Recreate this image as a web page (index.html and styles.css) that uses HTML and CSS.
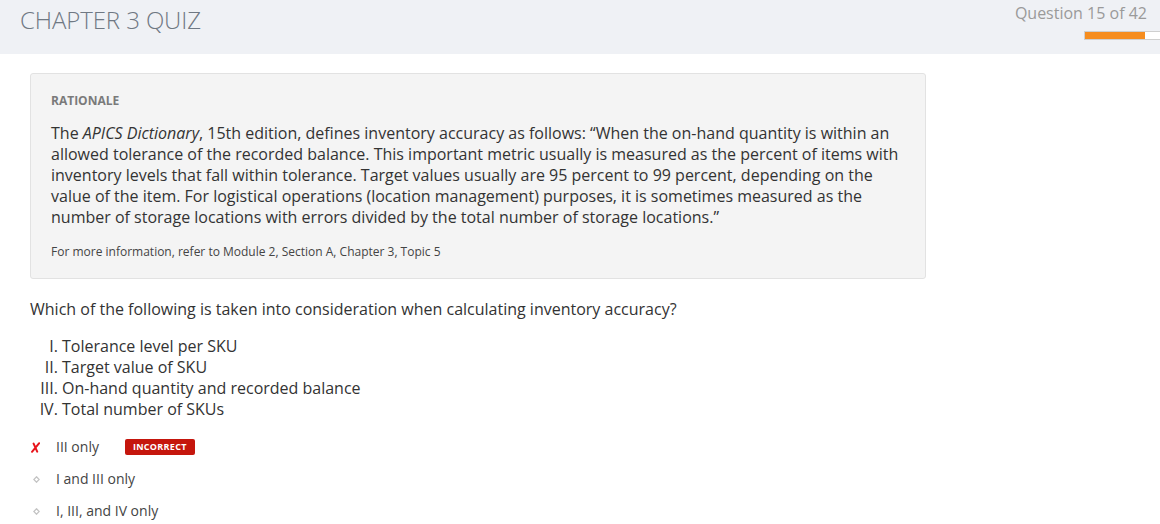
FILE: index.html
```html
<!DOCTYPE html>
<html>
<head>
<meta charset="utf-8">
<link rel="stylesheet" href="styles.css">
</head>
<body>
<header class="top">
  <h1 class="title">CHAPTER 3 QUIZ</h1>
  <div class="progress-area">
    <div class="counter">Question 15 of 42</div>
    <div class="bar"><div class="fill" style="width:80%"></div></div>
  </div>
</header>
<main class="content">
  <section class="rationale">
    <div class="r-head">RATIONALE</div>
    <p class="r-body">The <em>APICS Dictionary</em>, 15th edition, defines inventory accuracy as follows: “When the on-hand quantity is within an allowed tolerance of the recorded balance. This important metric usually is measured as the percent of items with inventory levels that fall within tolerance. Target values usually are 95 percent to 99 percent, depending on the value of the item. For logistical operations (location management) purposes, it is sometimes measured as the number of storage locations with errors divided by the total number of storage locations.”</p>
    <p class="r-ref">For more information, refer to Module 2, Section A, Chapter 3, Topic 5</p>
  </section>
  <p class="question">Which of the following is taken into consideration when calculating inventory accuracy?</p>
  <ol class="roman">
    <li>Tolerance level per SKU</li>
    <li>Target value of SKU</li>
    <li>On-hand quantity and recorded balance</li>
    <li>Total number of SKUs</li>
  </ol>
  <ul class="options">
    <li class="opt"><span class="mark"><svg width="9" height="11" viewBox="0 0 9 11"><path d="M2.6 1.6 L6.2 9.6 M8.2 1.2 L1 9.8" fill="none" stroke="#e8141b" stroke-width="2" stroke-linecap="round"/></svg></span><span class="opt-text">III only</span><span class="badge">INCORRECT</span></li>
    <li class="opt"><span class="mark dia"><svg width="7" height="7" viewBox="0 0 7 7"><path d="M3.5 0.8 L6.2 3.5 L3.5 6.2 L0.8 3.5 Z" fill="none" stroke="#c4c4c4" stroke-width="1.3"/></svg></span><span class="opt-text">I and III only</span></li>
    <li class="opt"><span class="mark dia"><svg width="7" height="7" viewBox="0 0 7 7"><path d="M3.5 0.8 L6.2 3.5 L3.5 6.2 L0.8 3.5 Z" fill="none" stroke="#c4c4c4" stroke-width="1.3"/></svg></span><span class="opt-text">I, III, and IV only</span></li>
  </ul>
</main>
</body>
</html>
```

FILE: styles.css
```css
* { box-sizing: border-box; }
html, body { margin: 0; padding: 0; background: #fff; }
body { font-family: "Open Sans", "Liberation Sans", sans-serif; color: #333; overflow: hidden; }

.top {
  height: 54px;
  background: #eff1f5;
  display: flex;
  justify-content: space-between;
  align-items: flex-start;
  padding-left: 20px;
}
.title {
  margin: 0;
  padding-top: 4px;
  font-weight: 300;
  font-size: 24px;
  line-height: 32px;
  color: #6f7883;
  letter-spacing: -0.1px;
}
.progress-area {
  display: flex;
  flex-direction: column;
  align-items: flex-end;
  padding-top: 2px;
}
.counter {
  font-size: 16px;
  line-height: 22px;
  color: #9a9a9a;
  padding-right: 13px;
}
.bar {
  margin-top: 7px;
  width: 76px;
  height: 9px;
  background: #fff;
  border: 1px solid #cfcfcf;
  border-right: none;
}
.fill { height: 100%; background: #f68d1f; }

.content { padding: 19px 0 0 30px; }

.rationale {
  width: 896px;
  background: #f4f4f4;
  border: 1px solid #e2e2e2;
  border-radius: 3px;
  padding: 19px 20px 18px 20px;
}
.r-head {
  font-size: 12px;
  font-weight: 700;
  color: #7a7a7a;
  line-height: 16px;
}
.r-body {
  margin: 14px 0 0 0;
  font-size: 16px;
  line-height: 21px;
  color: #333;
}
.r-ref {
  margin: 16px 0 0 0;
  font-size: 12px;
  line-height: 16px;
  color: #444;
}

.question {
  margin: 20px 0 0 0;
  font-size: 16px;
  line-height: 21px;
  color: #333;
}

.roman {
  list-style: upper-roman;
  margin: 16px 0 0 0;
  padding-left: 32px;
  font-size: 16px;
  line-height: 21px;
  color: #333;
}

.options { list-style: none; margin: 11px 0 0 0; padding: 0; }
.opt {
  display: flex;
  align-items: center;
  height: 32px;
  font-size: 14px;
  color: #444;
}
.mark {
  width: 26px;
  display: flex;
  align-items: center;
  justify-content: flex-start;
  padding-left: 1px;
}
.mark.dia { padding-left: 3px; }
.opt-text { line-height: 20px; }
.badge {
  margin-left: 26px;
  background: #c5160d;
  color: #fff;
  font-size: 9px;
  font-weight: 700;
  letter-spacing: 0.3px;
  line-height: 16px;
  padding: 0 8px;
  border-radius: 2px;
}
```
